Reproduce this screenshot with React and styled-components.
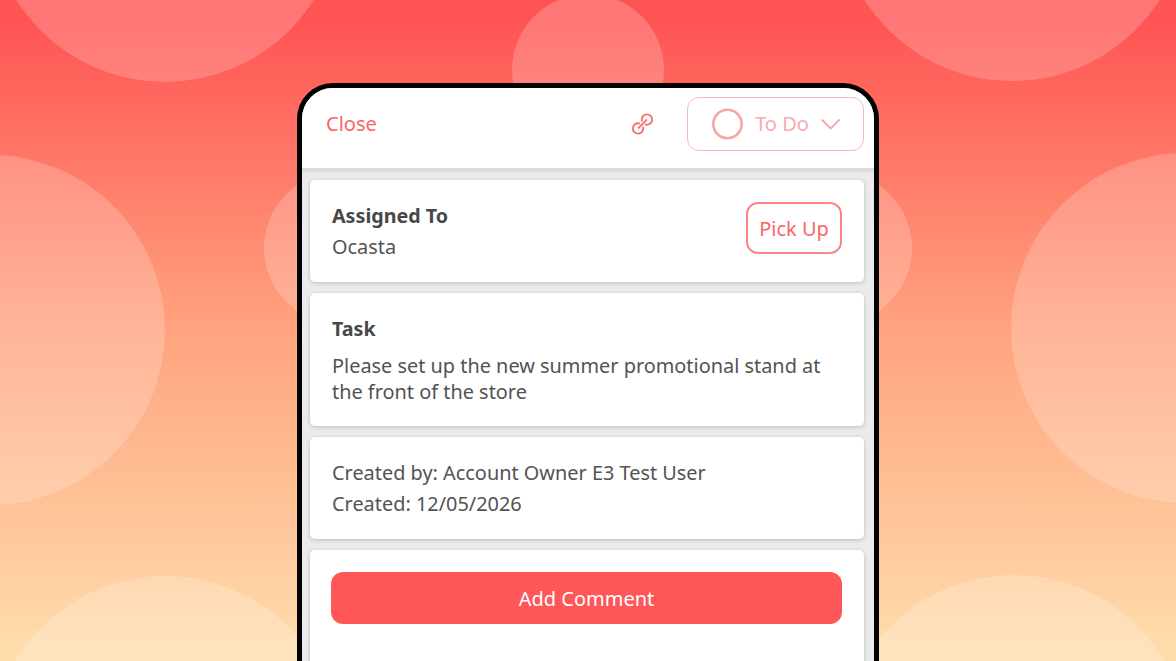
import styled, { createGlobalStyle } from "styled-components";

const GlobalStyle = createGlobalStyle`
  * {
    box-sizing: border-box;
  }
  body {
    margin: 0;
    font-family: "Noto Sans", sans-serif;
    color: #535353;
  }
  p, h2 {
    margin: 0;
  }
`;

const Page = styled.main`
  position: relative;
  height: 661px;
  overflow: hidden;
  display: flex;
  justify-content: center;
  padding-top: 83px;
  background: linear-gradient(#ff5454 3%, #ffa37e 50%, #ffdcac 98%);
`;

const Bubble = styled.div`
  position: absolute;
  left: ${(props) => props.$x - props.$r}px;
  top: ${(props) => props.$y - props.$r}px;
  width: ${(props) => props.$r * 2}px;
  height: ${(props) => props.$r * 2}px;
  border-radius: 50%;
  background: rgba(255, 255, 255, 0.2);
`;

const Phone = styled.section`
  position: relative;
  width: 582px;
  height: 700px;
  flex: none;
  border: 5px solid #000;
  border-radius: 36px;
  background: #ebebeb;
  overflow: hidden;
`;

const Header = styled.header`
  display: flex;
  align-items: flex-start;
  height: 81px;
  padding: 9px 10px 0 24px;
  background: #fff;
  border-bottom: 1px solid #ddd;
  box-shadow: 0 1px 4px rgba(0, 0, 0, 0.15);
`;

const Button = styled.button`
  font: inherit;
  font-size: 20px;
  height: 52px;
  padding: 0;
  color: #fb6467;
  background: #fff;
  border: 2px solid #fa8587;
  border-radius: 12px;
`;

const CloseButton = styled(Button)`
  border: none;
  margin-right: auto;
`;

const LinkIcon = styled.svg`
  width: 24px;
  height: 24px;
  margin: 15px 33px 0 0;
`;

const StatusButton = styled(Button)`
  display: flex;
  align-items: center;
  justify-content: center;
  gap: 12px;
  width: 177px;
  height: 54px;
  padding: 0 0 1px 1px;
  color: #f9aaac;
  border: 1px solid #fab5b7;
`;

const Cards = styled.div`
  display: flex;
  flex-direction: column;
  gap: 11px;
  padding: 11px 10px 0 7.5px;
`;

const Card = styled.article`
  height: ${(props) => props.$height}px;
  padding: 20px 22px 20px 22.5px;
  background: #fff;
  border-radius: 5px;
  box-shadow: 0 1px 4px rgba(0, 0, 0, 0.2);
  font-size: 19.9px;
  line-height: 31px;
`;

const AssignedCard = styled(Card)`
  display: flex;
  justify-content: space-between;
`;

const Title = styled.h2`
  font-size: 19.7px;
  line-height: 31px;
  font-weight: 700;
  color: #484848;
`;

const Description = styled.p`
  margin-top: 9px;
  line-height: 26px;
`;

const PickUpButton = styled(Button)`
  width: 96px;
  margin-top: 2px;
  padding-top: 1px;
`;

const CommentButton = styled(Button)`
  display: block;
  width: calc(100% + 1px);
  margin: 2px 0 0 -1px;
  color: #fff;
  background: #ff5757;
  border: none;
`;

const bubbles = [
  { x: 165, y: -94, r: 176 },
  { x: 1012, y: -94, r: 175 },
  { x: 588, y: 70, r: 76 },
  { x: -10, y: 329.5, r: 175 },
  { x: 1186, y: 328, r: 175 },
  { x: 340, y: 248, r: 76 },
  { x: 836, y: 248, r: 76 },
  { x: 165, y: 751, r: 175 },
  { x: 1014, y: 750, r: 175 },
];

const App = () => {
  return (
    <Page>
      <GlobalStyle />
      {bubbles.map((bubble) => (
        <Bubble
          key={`${bubble.x},${bubble.y}`}
          $x={bubble.x}
          $y={bubble.y}
          $r={bubble.r}
        />
      ))}
      <Phone>
        <Header>
          <CloseButton>Close</CloseButton>
          <LinkIcon
            viewBox="-12.5 -12 24 24"
            fill="none"
            stroke="#f96c70"
            strokeWidth="1.9"
            strokeLinecap="round"
          >
            <g transform="rotate(-45)">
              <path d="M-1.8 -2.6A5.2 5.2 0 1 0 -1.8 2.6" />
              <path d="M1.8 -2.6A5.2 5.2 0 1 1 1.8 2.6" />
              <path d="M-5.5 0H5.5" />
            </g>
          </LinkIcon>
          <StatusButton>
            <svg width="32" height="32" viewBox="0 0 32 32" fill="none" stroke="#f9a5a7" strokeWidth="2.6">
              <circle cx="16.5" cy="16" r="14.200" />
            </svg>
            To Do
            <svg width="20" height="12" viewBox="0 0 20 12" fill="none" stroke="#f9a5a7" strokeWidth="1.8">
              <path d="M.7 1.5l9 9 9-9" />
            </svg>
          </StatusButton>
        </Header>
        <Cards>
          <AssignedCard $height={102}>
            <div>
              <Title>Assigned To</Title>
              <p>Ocasta</p>
            </div>
            <PickUpButton>Pick Up</PickUpButton>
          </AssignedCard>
          <Card $height={133}>
            <Title>Task</Title>
            <Description>
              Please set up the new summer promotional stand at the front of
              the store
            </Description>
          </Card>
          <Card $height={102}>
            <p>Created by: Account Owner E3 Test User</p>
            <p>Created: 12/05/2026</p>
          </Card>
          <Card $height={150}>
            <CommentButton>Add Comment</CommentButton>
          </Card>
        </Cards>
      </Phone>
    </Page>
  );
};

export default App;
